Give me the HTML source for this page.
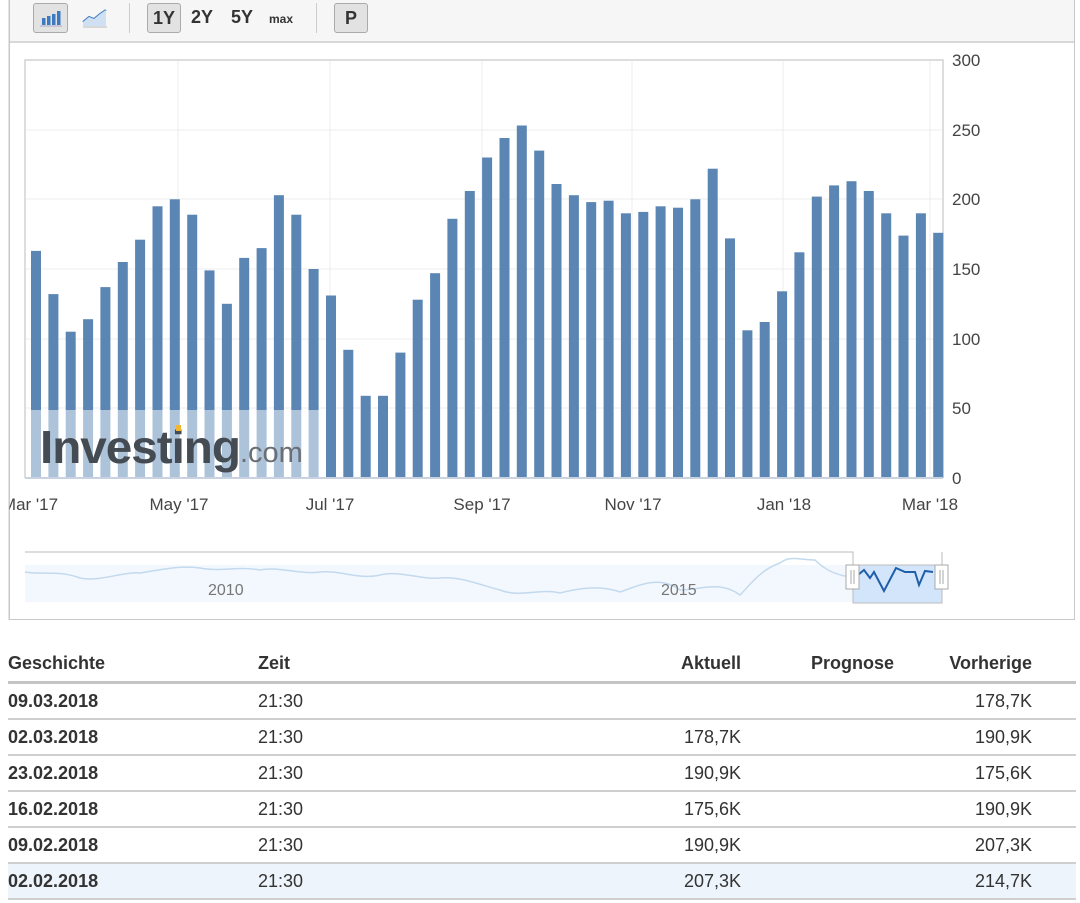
<!DOCTYPE html>
<html><head><meta charset="utf-8"><style>
body{margin:0;width:1080px;height:903px;background:#fff;font-family:"Liberation Sans",Arial,sans-serif;color:#333;overflow:hidden;position:relative}
.frame{position:absolute;left:9px;top:-2px;width:1066px;height:622px;border:1px solid #c8c8c8;box-sizing:border-box}
.tb{position:absolute;left:0;top:0;width:1064px;height:42px;background:#f6f6f6;border-bottom:2px solid #d8d8d8}
.btn{position:absolute;top:4px;height:30px;border:1px solid #aaa;border-radius:3px;background:#e2e2e2;box-sizing:border-box;font-size:18px;font-weight:bold;text-align:center;line-height:28px;color:#333}
.t{position:absolute;font-size:18px;font-weight:bold;top:8px;color:#333}
.sep{position:absolute;top:4px;width:1px;height:30px;background:#ccc}
table{position:absolute;left:8px;top:645px;width:1068px;border-collapse:collapse;font-size:18px}
td,th{height:34px;padding:0;border-bottom:2px solid #cfcfcf}
th{text-align:left;font-weight:bold;border-bottom:3px solid #c4c4c4;height:36px}
.r{text-align:right}
td.b{font-weight:bold}
</style></head><body>
<div class="frame">
<div class="tb">
<div class="btn" style="left:23px;width:35px"><svg width="33" height="28" viewBox="0 0 33 28"><rect x="8" y="14" width="3.5" height="7" fill="#3d7ac0"/><rect x="13" y="12" width="3.5" height="9" fill="#3d7ac0"/><rect x="18" y="10" width="3.5" height="11" fill="#3d7ac0"/><rect x="23" y="7" width="3.5" height="14" fill="#3d7ac0"/><line x1="6" y1="22" x2="28" y2="22" stroke="#aac" stroke-width="1"/></svg></div>
<svg style="position:absolute;left:70px;top:6px" width="30" height="28"><path d="M3 17 L9 12 L14 14 L20 9 L26 5" fill="none" stroke="#3d7ac0" stroke-width="2"/><path d="M3 17 L9 12 L14 14 L20 9 L26 5 L26 21 L3 21Z" fill="#cfe0f3"/><line x1="3" y1="22" x2="27" y2="22" stroke="#bbb"/></svg>
<div class="sep" style="left:119px"></div>
<div class="btn" style="left:137px;width:34px">1Y</div>
<div class="t" style="left:181px">2Y</div>
<div class="t" style="left:221px">5Y</div>
<div class="t" style="left:259px;font-size:12px;top:13px">max</div>
<div class="sep" style="left:306px"></div>
<div class="btn" style="left:324px;width:34px">P</div>
</div>
</div>
<svg style="position:absolute;left:0;top:0" width="1080" height="620">
<g stroke="#ececec" stroke-width="1">
<line x1="25" y1="130" x2="943" y2="130"/><line x1="25" y1="199" x2="943" y2="199"/><line x1="25" y1="269" x2="943" y2="269"/><line x1="25" y1="339" x2="943" y2="339"/><line x1="25" y1="408" x2="943" y2="408"/>
<line x1="178" y1="60" x2="178" y2="478"/><line x1="330" y1="60" x2="330" y2="478"/><line x1="482" y1="60" x2="482" y2="478"/><line x1="632" y1="60" x2="632" y2="478"/><line x1="783" y1="60" x2="783" y2="478"/><line x1="930" y1="60" x2="930" y2="478"/>
</g>
<path d="M25 478 L25 60 L943 60 L943 478" fill="none" stroke="#ddd" stroke-width="2"/>
<g fill="#5b86b4">
<rect x="31" y="250.9" width="10" height="227.1"/><rect x="48.4" y="294.1" width="10" height="183.9"/><rect x="65.7" y="331.7" width="10" height="146.3"/><rect x="83.1" y="319.2" width="10" height="158.8"/><rect x="100.4" y="287.1" width="10" height="190.9"/><rect x="117.8" y="262" width="10" height="216"/><rect x="135.1" y="239.7" width="10" height="238.3"/><rect x="152.5" y="206.3" width="10" height="271.7"/><rect x="169.8" y="199.3" width="10" height="278.7"/><rect x="187.2" y="214.7" width="10" height="263.3"/><rect x="204.5" y="270.4" width="10" height="207.6"/><rect x="221.9" y="303.8" width="10" height="174.2"/><rect x="239.2" y="257.9" width="10" height="220.1"/><rect x="256.6" y="248.1" width="10" height="229.9"/><rect x="273.9" y="195.2" width="10" height="282.8"/><rect x="291.3" y="214.7" width="10" height="263.3"/><rect x="308.6" y="269" width="10" height="209"/><rect x="326" y="295.5" width="10" height="182.5"/><rect x="343.3" y="349.8" width="10" height="128.2"/><rect x="360.7" y="395.8" width="10" height="82.2"/><rect x="378" y="395.8" width="10" height="82.2"/><rect x="395.4" y="352.6" width="10" height="125.4"/><rect x="412.7" y="299.7" width="10" height="178.3"/><rect x="430.1" y="273.2" width="10" height="204.8"/><rect x="447.4" y="218.8" width="10" height="259.2"/><rect x="464.8" y="191" width="10" height="287"/><rect x="482.1" y="157.5" width="10" height="320.5"/><rect x="499.5" y="138" width="10" height="340"/><rect x="516.8" y="125.5" width="10" height="352.5"/><rect x="534.2" y="150.6" width="10" height="327.4"/><rect x="551.5" y="184" width="10" height="294"/><rect x="568.9" y="195.2" width="10" height="282.8"/><rect x="586.2" y="202.1" width="10" height="275.9"/><rect x="603.6" y="200.7" width="10" height="277.3"/><rect x="620.9" y="213.3" width="10" height="264.7"/><rect x="638.3" y="211.9" width="10" height="266.1"/><rect x="655.6" y="206.3" width="10" height="271.7"/><rect x="673" y="207.7" width="10" height="270.3"/><rect x="690.3" y="199.3" width="10" height="278.7"/><rect x="707.7" y="168.7" width="10" height="309.3"/><rect x="725" y="238.4" width="10" height="239.6"/><rect x="742.4" y="330.3" width="10" height="147.7"/><rect x="759.7" y="322" width="10" height="156"/><rect x="777.1" y="291.3" width="10" height="186.7"/><rect x="794.4" y="252.3" width="10" height="225.7"/><rect x="811.8" y="196.6" width="10" height="281.4"/><rect x="829.1" y="185.4" width="10" height="292.6"/><rect x="846.5" y="181.2" width="10" height="296.8"/><rect x="863.8" y="191" width="10" height="287"/><rect x="881.2" y="213.3" width="10" height="264.7"/><rect x="898.5" y="235.6" width="10" height="242.4"/><rect x="915.9" y="213.3" width="10" height="264.7"/><rect x="933.2" y="232.8" width="10" height="245.2"/>
</g>
<rect x="26" y="410" width="294" height="67" fill="#fff" opacity="0.5"/>
<text x="40" y="463" font-size="46" font-weight="bold" fill="#454b52" letter-spacing="-1" textLength="200" lengthAdjust="spacingAndGlyphs">Investing</text>
<rect x="176" y="425" width="5" height="6" fill="#f2b632"/>
<text x="240" y="462" font-size="29" fill="#6a6f75">.com</text>
<line x1="25" y1="478" x2="943" y2="478" stroke="#c8d2e0" stroke-width="2"/>
<g font-size="17" fill="#444">
<text x="952" y="66">300</text><text x="952" y="136">250</text><text x="952" y="205">200</text><text x="952" y="275">150</text><text x="952" y="345">100</text><text x="952" y="414">50</text><text x="952" y="484">0</text>
</g>
<g font-size="17" fill="#444" text-anchor="middle">
<text x="30" y="510">Mar '17</text><text x="179" y="510">May '17</text><text x="330" y="510">Jul '17</text><text x="482" y="510">Sep '17</text><text x="633" y="510">Nov '17</text><text x="784" y="510">Jan '18</text><text x="930" y="510">Mar '18</text>
</g>
<rect x="0" y="490" width="9" height="30" fill="#fff"/>
<line x1="9" y1="0" x2="9" y2="620" stroke="#c8c8c8"/>
<rect x="25" y="565" width="830" height="37" fill="#f3f8fe"/>
<path d="M25 572 C40 575 60 570 80 578 C100 582 120 572 140 573 C160 570 180 565 200 568 C220 572 240 566 260 570 C280 566 300 575 320 572 C340 570 360 580 380 575 C400 570 420 580 440 578 C460 576 480 585 500 590 C520 598 540 588 560 593 C580 588 600 585 620 592 C640 585 660 575 680 590 C700 590 720 580 740 595 C750 585 760 570 780 563 C790 555 800 560 815 560 C825 570 835 575 855 578" fill="none" stroke="#c3d9ee" stroke-width="1.5"/>
<path d="M25 552 L853 552 L853 590" fill="none" stroke="#bbb" stroke-width="1"/>
<rect x="853" y="565" width="89" height="38" fill="#d3e5fb" stroke="#bbb"/>
<path d="M858 575 L864 570 L870 578 L874 572 L884 591 L896 568 L905 572 L915 572 L919 585 L925 571 L933 572" fill="none" stroke="#1f5ea8" stroke-width="2"/>
<line x1="942" y1="552" x2="942" y2="603" stroke="#bbb"/>
<rect x="846" y="565" width="13" height="24" fill="#fff" stroke="#aaa"/><rect x="935" y="565" width="13" height="24" fill="#fff" stroke="#aaa"/>
<g stroke="#aaa"><line x1="851" y1="570" x2="851" y2="584"/><line x1="854" y1="570" x2="854" y2="584"/><line x1="940" y1="570" x2="940" y2="584"/><line x1="943" y1="570" x2="943" y2="584"/></g>
<text x="208" y="595" font-size="16" fill="#777">2010</text><text x="661" y="595" font-size="16" fill="#777">2015</text>
</svg>
<table>
<tr><th style="width:250px">Geschichte</th><th style="width:270px">Zeit</th><th class="r" style="width:213px">Aktuell</th><th class="r" style="width:153px">Prognose</th><th class="r" style="width:138px">Vorherige</th><th></th></tr>
<tr><td class="b">09.03.2018</td><td>21:30</td><td class="r"></td><td></td><td class="r">178,7K</td><td></td></tr>
<tr><td class="b">02.03.2018</td><td>21:30</td><td class="r">178,7K</td><td></td><td class="r">190,9K</td><td></td></tr>
<tr><td class="b">23.02.2018</td><td>21:30</td><td class="r">190,9K</td><td></td><td class="r">175,6K</td><td></td></tr>
<tr><td class="b">16.02.2018</td><td>21:30</td><td class="r">175,6K</td><td></td><td class="r">190,9K</td><td></td></tr>
<tr><td class="b">09.02.2018</td><td>21:30</td><td class="r">190,9K</td><td></td><td class="r">207,3K</td><td></td></tr>
<tr style="background:#edf4fb"><td class="b">02.02.2018</td><td>21:30</td><td class="r">207,3K</td><td></td><td class="r">214,7K</td><td></td></tr>
</table>
</body></html>
